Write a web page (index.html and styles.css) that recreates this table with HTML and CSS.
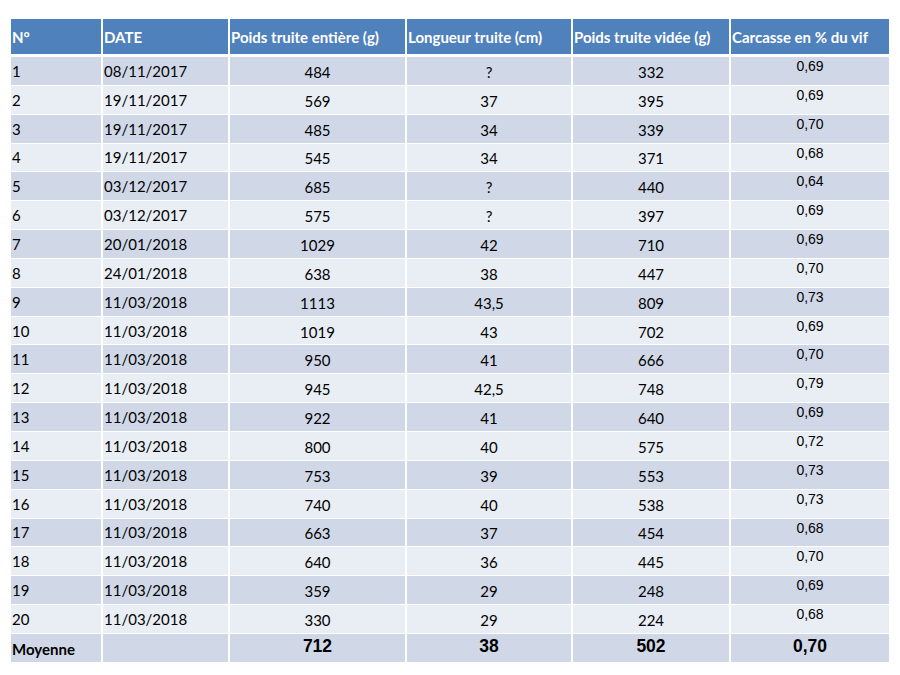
FILE: index.html
```html
<!DOCTYPE html>
<html lang="fr">
<head>
<meta charset="utf-8">
<title>Truites</title>
<link rel="stylesheet" href="styles.css">
</head>
<body>
<div class="sheet">
  <div class="row head">
    <div class="c">N°</div>
    <div class="c">DATE</div>
    <div class="c">Poids truite entière (g)</div>
    <div class="c">Longueur truite (cm)</div>
    <div class="c">Poids truite vidée (g)</div>
    <div class="c">Carcasse en % du vif</div>
  </div>
  <div class="row dark"><div class="c">1</div><div class="c">08/11/2017</div><div class="c num">484</div><div class="c num">?</div><div class="c num">332</div><div class="c pct">0,69</div></div>
  <div class="row light"><div class="c">2</div><div class="c">19/11/2017</div><div class="c num">569</div><div class="c num">37</div><div class="c num">395</div><div class="c pct">0,69</div></div>
  <div class="row dark"><div class="c">3</div><div class="c">19/11/2017</div><div class="c num">485</div><div class="c num">34</div><div class="c num">339</div><div class="c pct">0,70</div></div>
  <div class="row light"><div class="c">4</div><div class="c">19/11/2017</div><div class="c num">545</div><div class="c num">34</div><div class="c num">371</div><div class="c pct">0,68</div></div>
  <div class="row dark"><div class="c">5</div><div class="c">03/12/2017</div><div class="c num">685</div><div class="c num">?</div><div class="c num">440</div><div class="c pct">0,64</div></div>
  <div class="row light"><div class="c">6</div><div class="c">03/12/2017</div><div class="c num">575</div><div class="c num">?</div><div class="c num">397</div><div class="c pct">0,69</div></div>
  <div class="row dark"><div class="c">7</div><div class="c">20/01/2018</div><div class="c num">1029</div><div class="c num">42</div><div class="c num">710</div><div class="c pct">0,69</div></div>
  <div class="row light"><div class="c">8</div><div class="c">24/01/2018</div><div class="c num">638</div><div class="c num">38</div><div class="c num">447</div><div class="c pct">0,70</div></div>
  <div class="row dark"><div class="c">9</div><div class="c">11/03/2018</div><div class="c num">1113</div><div class="c num">43,5</div><div class="c num">809</div><div class="c pct">0,73</div></div>
  <div class="row light"><div class="c">10</div><div class="c">11/03/2018</div><div class="c num">1019</div><div class="c num">43</div><div class="c num">702</div><div class="c pct">0,69</div></div>
  <div class="row dark"><div class="c">11</div><div class="c">11/03/2018</div><div class="c num">950</div><div class="c num">41</div><div class="c num">666</div><div class="c pct">0,70</div></div>
  <div class="row light"><div class="c">12</div><div class="c">11/03/2018</div><div class="c num">945</div><div class="c num">42,5</div><div class="c num">748</div><div class="c pct">0,79</div></div>
  <div class="row dark"><div class="c">13</div><div class="c">11/03/2018</div><div class="c num">922</div><div class="c num">41</div><div class="c num">640</div><div class="c pct">0,69</div></div>
  <div class="row light"><div class="c">14</div><div class="c">11/03/2018</div><div class="c num">800</div><div class="c num">40</div><div class="c num">575</div><div class="c pct">0,72</div></div>
  <div class="row dark"><div class="c">15</div><div class="c">11/03/2018</div><div class="c num">753</div><div class="c num">39</div><div class="c num">553</div><div class="c pct">0,73</div></div>
  <div class="row light"><div class="c">16</div><div class="c">11/03/2018</div><div class="c num">740</div><div class="c num">40</div><div class="c num">538</div><div class="c pct">0,73</div></div>
  <div class="row dark"><div class="c">17</div><div class="c">11/03/2018</div><div class="c num">663</div><div class="c num">37</div><div class="c num">454</div><div class="c pct">0,68</div></div>
  <div class="row light"><div class="c">18</div><div class="c">11/03/2018</div><div class="c num">640</div><div class="c num">36</div><div class="c num">445</div><div class="c pct">0,70</div></div>
  <div class="row dark"><div class="c">19</div><div class="c">11/03/2018</div><div class="c num">359</div><div class="c num">29</div><div class="c num">248</div><div class="c pct">0,69</div></div>
  <div class="row light"><div class="c">20</div><div class="c">11/03/2018</div><div class="c num">330</div><div class="c num">29</div><div class="c num">224</div><div class="c pct">0,68</div></div>
  <div class="row dark total"><div class="c label">Moyenne</div><div class="c"></div><div class="c big">712</div><div class="c big">38</div><div class="c big">502</div><div class="c big">0,70</div></div>
</div>
</body>
</html>
```

FILE: styles.css
```css
html, body {
  margin: 0;
  padding: 0;
  background: #ffffff;
}

body {
  font-family: Lato, "Open Sans", sans-serif;
  color: #000000;
}

.sheet {
  width: 878px;
  margin: 19px 0 0 11px;
  display: flex;
  flex-direction: column;
  gap: 1px;
}

.row {
  display: grid;
  grid-template-columns: 90px 125px 175px 164px 156px 158px;
  column-gap: 2px;
  height: 27.85px;
}

.row.head {
  height: 35px;
  margin-bottom: 2px;
}

.c {
  display: flex;
  align-items: center;
  padding-left: 1px;
  font-size: 15px;
  white-space: nowrap;
  overflow: hidden;
}

.head .c {
  background: #4f81bd;
  color: #ffffff;
  font-weight: 700;
  font-size: 15px;
  padding-top: 1px;
}

.dark .c {
  background: #d0d8e8;
}

.light .c {
  background: #e9edf4;
}

.num {
  justify-content: center;
  padding-left: 0;
  padding-top: 2px;
}

.pct {
  justify-content: center;
  align-items: flex-start;
  padding-left: 0;
  padding-top: 1px;
  font-family: "Liberation Sans", Arial, sans-serif;
  font-size: 14px;
}

.label {
  font-weight: 700;
  font-size: 15px;
  padding-top: 3px;
}

.big {
  justify-content: center;
  padding-left: 0;
  padding-bottom: 3px;
  font-family: "Liberation Sans", Arial, sans-serif;
  font-weight: 700;
  font-size: 17.5px;
}
```
